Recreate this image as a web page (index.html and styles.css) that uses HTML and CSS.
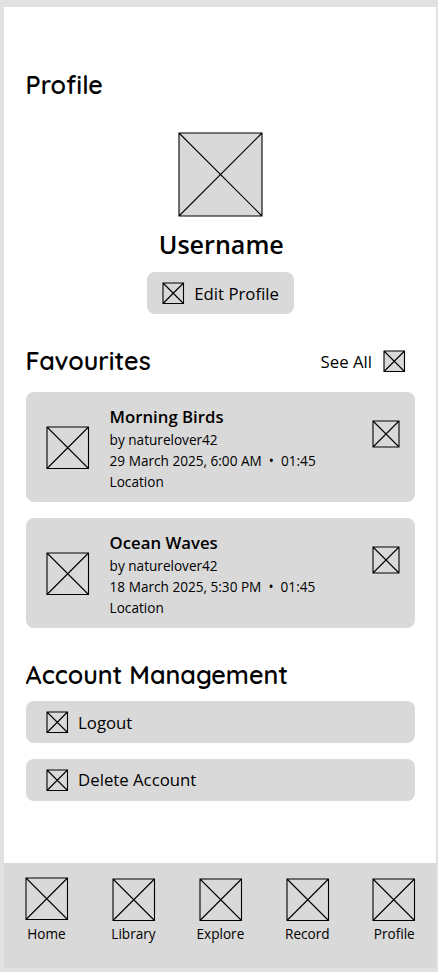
FILE: index.html
```html
<!DOCTYPE html>
<html lang="en">
<head>
<meta charset="utf-8">
<title>Profile</title>
<link rel="stylesheet" href="styles.css">
</head>
<body>
<svg width="0" height="0" class="defs"><symbol id="box" viewBox="0 0 100 100" preserveAspectRatio="none"><path d="M0 0H100V100H0ZL100 100M100 0L0 100" vector-effect="non-scaling-stroke"/></symbol></svg>
<div class="phone">
  <main class="content">
    <h1 class="heading heading-profile">Profile</h1>
    <section class="user">
      <svg class="icon avatar"><use href="#box"/></svg>
      <div class="username">Username</div>
      <div class="edit"><svg class="icon small"><use href="#box"/></svg><span class="edit-label">Edit Profile</span></div>
    </section>
    <div class="section-head">
      <h2 class="heading heading-favourites">Favourites</h2>
      <div class="see-all"><span class="see-label">See All</span><svg class="icon small"><use href="#box"/></svg></div>
    </div>
    <div class="cards">
      <article class="card">
        <svg class="icon medium"><use href="#box"/></svg>
        <div class="info"><h3 class="title title-morning">Morning Birds</h3><p class="author">by naturelover42</p><p class="date">29 March 2025, 6:00 AM &nbsp;•&nbsp; 01:45</p><p class="place">Location</p></div>
        <svg class="icon fav"><use href="#box"/></svg>
      </article>
      <article class="card">
        <svg class="icon medium"><use href="#box"/></svg>
        <div class="info"><h3 class="title title-ocean">Ocean Waves</h3><p class="author">by naturelover42</p><p class="date">18 March 2025, 5:30 PM &nbsp;•&nbsp; 01:45</p><p class="place">Location</p></div>
        <svg class="icon fav"><use href="#box"/></svg>
      </article>
    </div>
    <h2 class="heading heading-account">Account Management</h2>
    <div class="actions">
      <div class="action"><svg class="icon small"><use href="#box"/></svg><span>Logout</span></div>
      <div class="action"><svg class="icon small"><use href="#box"/></svg><span>Delete Account</span></div>
    </div>
  </main>
  <nav class="nav">
    <div class="tab home"><svg class="icon medium"><use href="#box"/></svg><span>Home</span></div>
    <div class="tab"><svg class="icon medium"><use href="#box"/></svg><span>Library</span></div>
    <div class="tab"><svg class="icon medium"><use href="#box"/></svg><span>Explore</span></div>
    <div class="tab"><svg class="icon medium"><use href="#box"/></svg><span>Record</span></div>
    <div class="tab"><svg class="icon medium"><use href="#box"/></svg><span>Profile</span></div>
  </nav>
</div>
</body>
</html>
```
FILE: styles.css
```css
* { box-sizing: border-box; margin: 0; padding: 0; }
body { background: #e1e1e1; color: #000; font-family: "Open Sans", "Noto Sans", sans-serif; height: 972px; overflow: hidden; padding: 7px 2px 0 4.3px; }
.defs { display: none; }
.phone { height: 960.5px; background: #fff; display: flex; flex-direction: column; }
.content { height: 856px; padding: 63px 21px 0 21.3px; }
.heading { font-family: Quicksand, Inter, sans-serif; font-feature-settings: "cv11"; font-weight: 600; font-size: 25.1px; line-height: 30px; white-space: nowrap; }
.icon { display: block; flex: none; fill: #d9d9d9; stroke: #000; stroke-width: 1.1px; overflow: visible; }
symbol { overflow: visible; }
.avatar { width: 83px; height: 83px; }
.small { width: 20.5px; height: 20.5px; }
.medium { width: 41.5px; height: 41.5px; }
.fav { width: 26px; height: 26px; margin-top: 28.5px; }
.user { display: flex; flex-direction: column; align-items: center; margin-top: 32.5px; }
.username { font-size: 25.1px; font-weight: 600; line-height: 32px; margin-top: 12.5px; margin-left: 2px; }
.edit { width: 147px; height: 42px; margin-top: 12px; border-radius: 8px; background: #d9d9d9; display: flex; align-items: center; padding-left: 16px; gap: 11px; font-size: 16.75px; }
.section-head { display: flex; justify-content: space-between; align-items: center; height: 30px; margin-top: 32px; }
.see-all { display: flex; align-items: center; gap: 12px; padding-right: 10.5px; font-size: 16.75px; }
.cards { display: flex; flex-direction: column; gap: 16px; margin-top: 16.3px; }
.card { height: 109.8px; border-radius: 8px; background: #d9d9d9; display: flex; padding: 0 16px 0 21px; }
.card .medium { margin-top: 34.5px; }
.info { flex: 1; padding: 12px 0 0 21.5px; white-space: nowrap; }
.title { font-size: 16.75px; line-height: 25px; font-weight: 600; }
.info p { font-size: 13.6px; line-height: 21px; }
.heading-account { margin-top: 32.5px; }
.actions { display: flex; flex-direction: column; gap: 15.8px; margin-top: 11px; }
.action { height: 41.8px; border-radius: 8px; background: #d9d9d9; display: flex; align-items: center; padding-left: 21px; gap: 11px; font-size: 16.75px; }
.nav { height: 104.5px; background: #d9d9d9; display: flex; justify-content: space-between; padding: 16px 21px 0 21.5px; }
.tab { width: 41.5px; display: flex; flex-direction: column; align-items: center; font-size: 13.6px; line-height: 20px; }
.tab span { margin-top: 3.5px; white-space: nowrap; }
.home .icon { margin-top: -1px; margin-bottom: 1px; }
```
